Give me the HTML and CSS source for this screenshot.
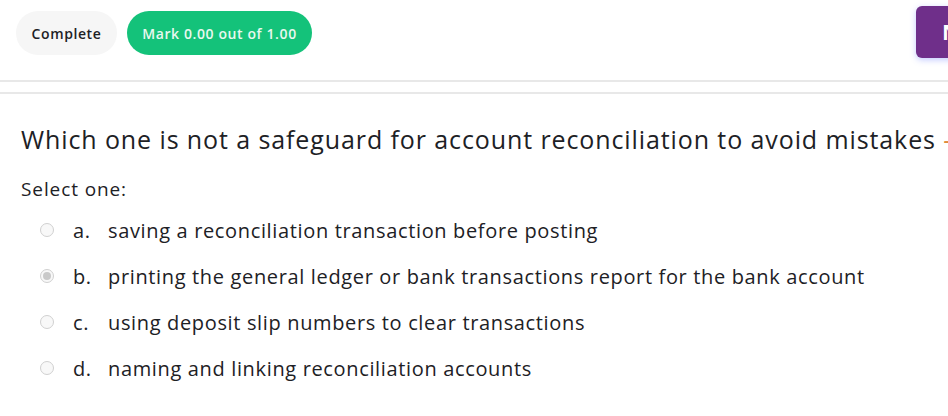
FILE: index.html
```html
<!DOCTYPE html>
<html>
<head>
<meta charset="utf-8">
<link rel="stylesheet" href="styles.css">
</head>
<body>
<div class="topbar">
  <div class="pills">
    <span class="pill pill-grey">Complete</span>
    <span class="pill pill-green">Mark 0.00 out of 1.00</span>
  </div>
  <span class="nextbtn">N</span>
</div>
<div class="rule"></div>
<div class="rule rule2"></div>
<div class="question">
  <h2 class="qtext">Which one is not a safeguard for account reconciliation to avoid mistakes <span class="more">-</span></h2>
  <div class="prompt">Select one:</div>
  <div class="answers">
    <div class="opt"><span class="radio"></span><span class="letter">a.</span><span class="otext">saving a reconciliation transaction before posting</span></div>
    <div class="opt"><span class="radio checked"></span><span class="letter">b.</span><span class="otext">printing the general ledger or bank transactions report for the bank account</span></div>
    <div class="opt"><span class="radio"></span><span class="letter">c.</span><span class="otext">using deposit slip numbers to clear transactions</span></div>
    <div class="opt"><span class="radio"></span><span class="letter">d.</span><span class="otext">naming and linking reconciliation accounts</span></div>
  </div>
</div>
</body>
</html>
```
FILE: styles.css
```css
html, body { margin: 0; padding: 0; background: #fff; overflow: hidden; }
body { font-family: "Open Sans", "Liberation Sans", sans-serif; color: #1d2125; width: 948px; height: 416px; }
.topbar { display: flex; justify-content: space-between; align-items: flex-start; height: 80px; }
.pills { display: flex; gap: 10px; padding: 11px 0 0 16px; }
.pill { display: flex; align-items: center; height: 44px; border-radius: 22px; font-size: 14px; font-weight: 600; letter-spacing: 0.6px; box-sizing: border-box; }
.pill-grey { background: #f6f6f6; color: #1d2125; width: 101px; justify-content: center; }
.pill-green { background: #14c27a; color: #e8f8ef; width: 185px; justify-content: center; }
.nextbtn { margin-top: 6px; width: 40px; height: 52px; box-sizing: border-box; background: #6f2f8a; border-radius: 6px 0 0 6px; color: #fff; font-weight: 700; font-size: 22px; padding: 10px 0 0 26px; box-shadow: 0 2px 6px rgba(90,110,255,0.35); margin-right: -8px; overflow: hidden; line-height: 30px; }
.rule { height: 2px; background: #e8e8e8; }
.rule2 { margin-top: 10px; }
.question { padding: 28px 0 0 21px; }
.qtext { margin: 0; font-size: 25px; font-weight: 400; line-height: 34px; white-space: nowrap; letter-spacing: 0.9px; }
.more { color: #e08a3c; }
.prompt { margin-top: 19px; font-size: 19px; line-height: 28px; letter-spacing: 0.9px; }
.answers { margin-top: 4px; padding-left: 19px; }
.opt { display: flex; align-items: center; height: 46px; font-size: 20px; white-space: nowrap; }
.radio { width: 14px; height: 14px; border: 1px solid #d0d0d0; border-radius: 50%; box-sizing: border-box; background: #f8f8f8; display: flex; align-items: center; justify-content: center; }
.radio.checked::after { content: ""; width: 8px; height: 8px; border-radius: 50%; background: #c9c9c9; }
.letter { margin-left: 19px; width: 35px; letter-spacing: 0.6px; }
.otext { letter-spacing: 0.65px; }
```
